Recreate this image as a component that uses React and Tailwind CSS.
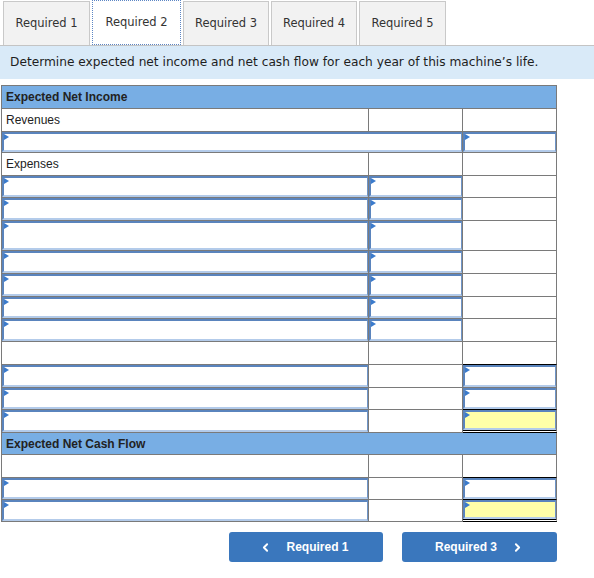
import React from "react";
import { ChevronLeft, ChevronRight } from "lucide-react";

const tabs = [
  { label: "Required 1", w: "w-[87px]" },
  { label: "Required 2", w: "w-[89px]", active: true },
  { label: "Required 3", w: "w-[86px]" },
  { label: "Required 4", w: "w-[86px]" },
  { label: "Required 5", w: "w-[87px]" },
];

function Arrow() {
  return (
    <span className="absolute left-0 top-0 w-0 h-0 border-y-[3px] border-y-transparent border-l-[5px] border-l-[#3b7bcc]" />
  );
}

function Field({ yellow, arrow = true }) {
  return (
    <div
      className={
        "relative h-full border-t-2 border-l-2 border-r border-b-2 border-t-[#5a84bd] border-l-[#5a84bd] border-r-[#6f95c8] border-b-[#b3cbea] " +
        (yellow ? "bg-[#ffffa8]" : "bg-white")
      }
    >
      {arrow && <Arrow />}
    </div>
  );
}

function Cell({ h, span = "", line = "border-b-[#7a7a7a]", children }) {
  return (
    <div className={`${h} ${span} border-r border-r-[#7a7a7a] border-b ${line}`}>
      {children}
    </div>
  );
}

function Header({ text, h }) {
  return (
    <div
      className={`${h} col-span-3 bg-[#78aee4] border-r border-b border-[#7a7a7a] flex items-center px-[4px] text-[12px] font-bold text-[#222]`}
    >
      {text}
    </div>
  );
}

function LabelRow({ text, h }) {
  return (
    <>
      <Cell h={h}>
        <div className="h-full flex items-center px-[4px] text-[12px] text-[#222]">{text}</div>
      </Cell>
      <Cell h={h} />
      <Cell h={h} />
    </>
  );
}

function ExpenseRow({ h }) {
  return (
    <>
      <Cell h={h}>
        <Field />
      </Cell>
      <Cell h={h}>
        <Field />
      </Cell>
      <Cell h={h} />
    </>
  );
}

function TotalRow({ h, yellow, line }) {
  return (
    <>
      <Cell h={h}>
        <Field />
      </Cell>
      <Cell h={h} />
      <Cell h={h} line={line}>
        <Field yellow={yellow} />
      </Cell>
    </>
  );
}

export default function App() {
  return (
    <div className="w-[594px] h-[578px] bg-white" style={{ fontFamily: '"Liberation Sans", Arial, sans-serif' }}>
      <div className="flex items-end gap-[2px] pl-[3px] h-[46px] border-b border-[#c4c4c4]">
        {tabs.map((t) => (
          <div
            key={t.label}
            className={
              t.w +
              " flex items-center justify-center text-[11.5px] text-[#333] " +
              (t.active
                ? "h-[45px] bg-white border border-dotted border-[#5d86c4]"
                : "h-[44px] bg-[#f2f2f2] border border-b-0 border-[#c9c9c9]")
            }
            style={{ fontFamily: '"DejaVu Sans", Verdana, sans-serif' }}
          >
            {t.label}
          </div>
        ))}
      </div>

      <div
        className="h-[33px] bg-[#d9eaf8] flex items-center pl-[10px] text-[12.2px] text-[#1e1e1e]"
        style={{ fontFamily: '"DejaVu Sans", Verdana, sans-serif' }}
      >
        Determine expected net income and net cash flow for each year of this machine’s life.
      </div>

      <div className="mt-[6px] ml-[1px] w-[556px] grid grid-cols-[367px_94px_94px] border-l border-t border-[#7a7a7a]">
        <Header text="Expected Net Income" h="h-[23px]" />
        <LabelRow text="Revenues" h="h-[23px]" />
        <Cell h="h-[21px]" span="col-span-2">
          <Field />
        </Cell>
        <Cell h="h-[21px]">
          <Field />
        </Cell>
        <LabelRow text="Expenses" h="h-[23px]" />
        <ExpenseRow h="h-[22px]" />
        <ExpenseRow h="h-[23px]" />
        <ExpenseRow h="h-[30px]" />
        <ExpenseRow h="h-[23px]" />
        <ExpenseRow h="h-[23px]" />
        <ExpenseRow h="h-[22px]" />
        <ExpenseRow h="h-[23px]" />

        <Cell h="h-[23px]" />
        <Cell h="h-[23px]" />
        <Cell h="h-[23px]" line="border-b-black" />
        <TotalRow h="h-[23px]" />
        <TotalRow h="h-[22px]" line="border-b-black" />
        <TotalRow h="h-[23px]" yellow line="border-b-[3px] border-double border-b-black" />

        <Header text="Expected Net Cash Flow" h="h-[22px]" />
        <Cell h="h-[23px]" />
        <Cell h="h-[23px]" />
        <Cell h="h-[23px]" line="border-b-black" />
        <TotalRow h="h-[22px]" line="border-b-black" />
        <TotalRow h="h-[22px]" yellow line="border-b-[3px] border-double border-b-black" />
      </div>

      <div className="w-[557px] flex justify-end gap-[19px] mt-[10px]">
        <button className="w-[154px] h-[30px] rounded-[3px] bg-[#3a77bd] text-white text-[12px] font-bold flex items-center justify-center gap-[14px] pr-[4px]">
          <ChevronLeft size={13} strokeWidth={3.5} />
          <span>Required 1</span>
        </button>
        <button className="w-[155px] h-[30px] rounded-[3px] bg-[#3a77bd] text-white text-[12px] font-bold flex items-center justify-center gap-[14px]">
          <span>Required 3</span>
          <ChevronRight size={13} strokeWidth={3.5} />
        </button>
      </div>
    </div>
  );
}
